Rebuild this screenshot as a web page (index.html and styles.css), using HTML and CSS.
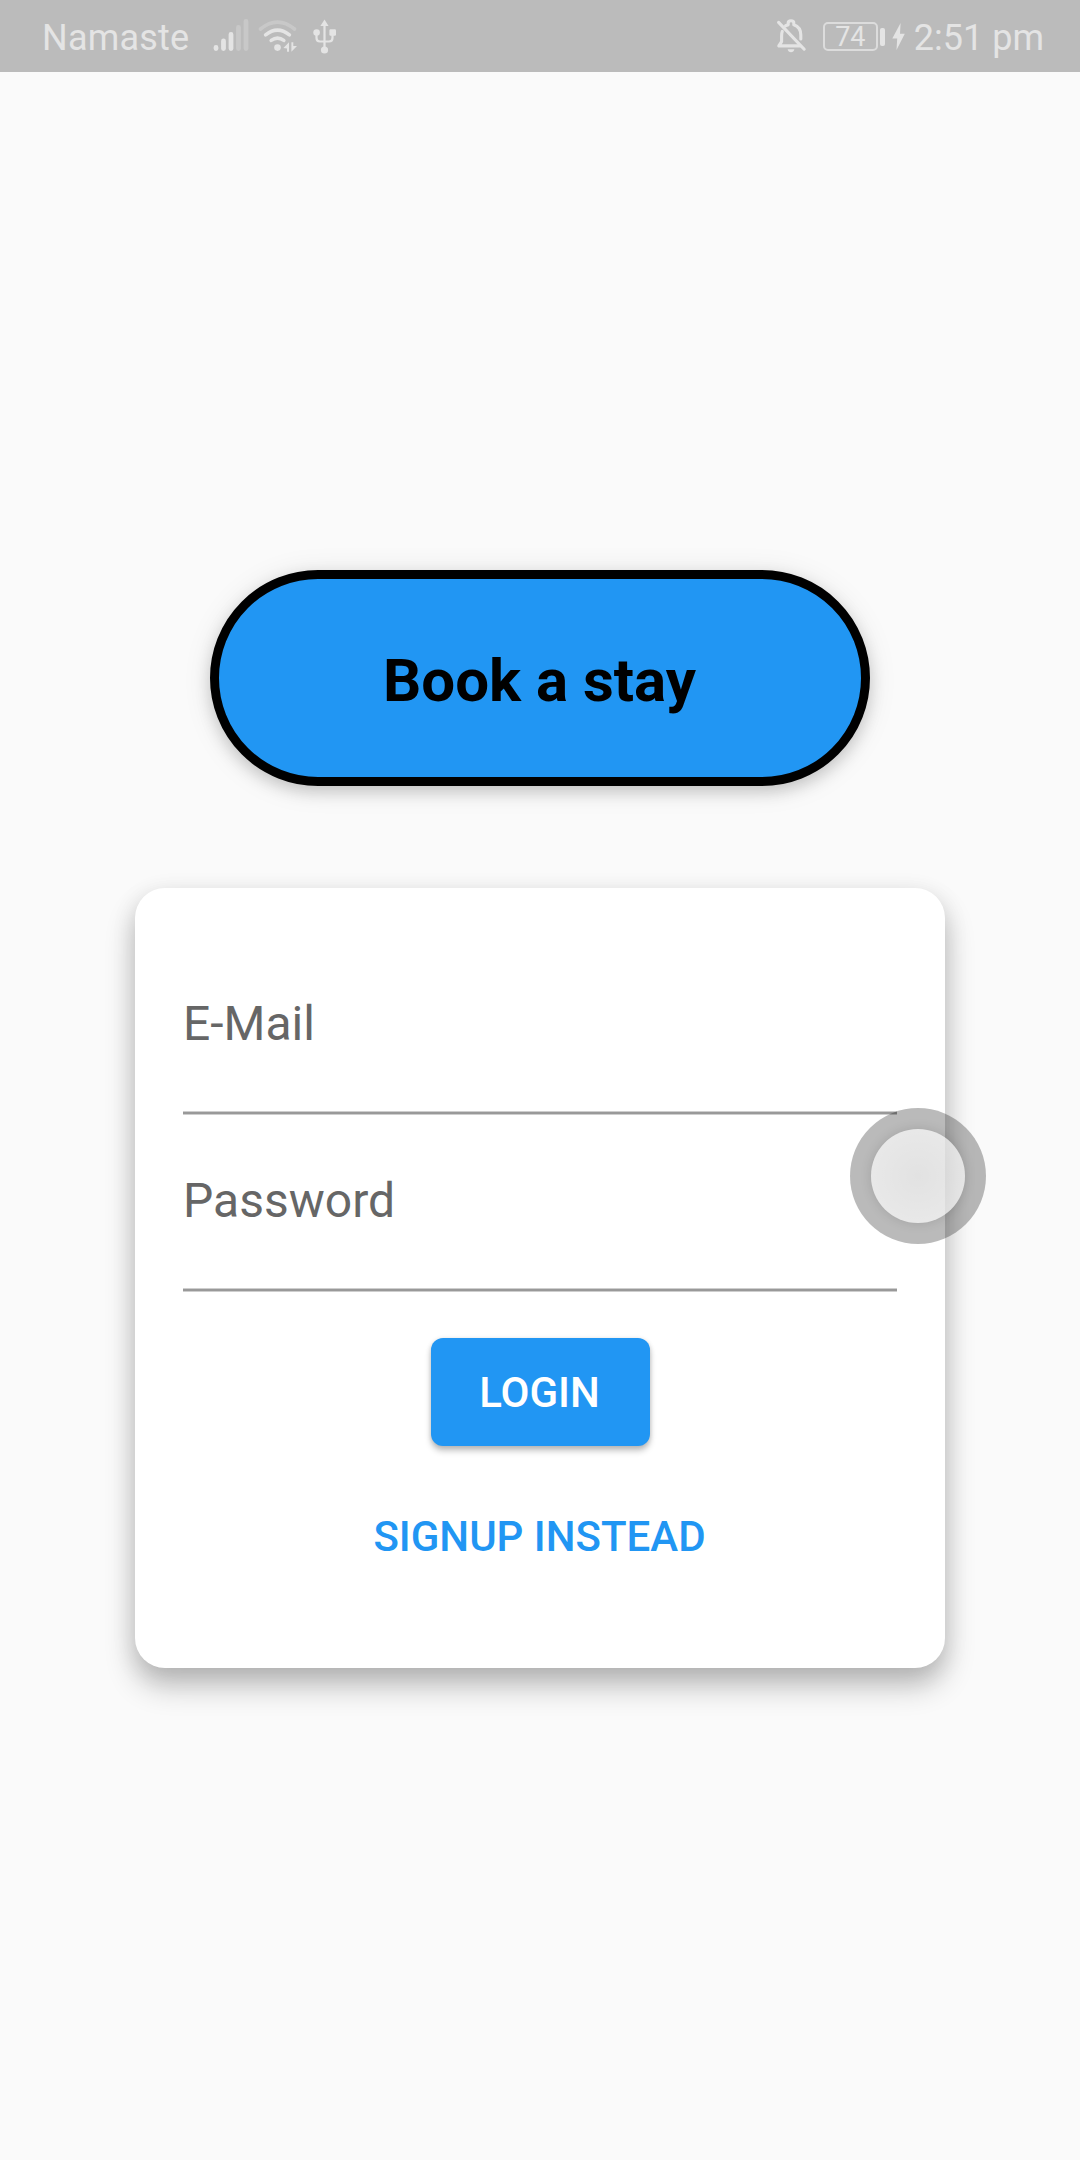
FILE: index.html
```html
<!DOCTYPE html>
<html lang="en">
<head>
<meta charset="utf-8">
<meta name="viewport" content="width=device-width">
<title>Book a stay</title>
<link rel="stylesheet" href="styles.css">
</head>
<body>
<header class="status-bar">
  <div class="status-left">
    <span class="carrier">Namaste</span>
    <svg class="icon-signal" width="36" height="34" viewBox="0 0 36 34" fill="none" stroke="#e4e4e4" stroke-width="4.8" stroke-linecap="round">
      <path d="M3 28.4V29.6M10.5 22V29.6M18 15.5V29.6"/>
      <path class="dim" d="M25.5 8.4V29.6M33 2.4V29.6"/>
    </svg>
    <svg class="icon-wifi" width="40" height="34" viewBox="0 0 40 34" fill="none" stroke="#e4e4e4" stroke-width="3.6" stroke-linecap="round">
      <path class="dim" d="M2.5 10Q19.5-3.8 36.5 10"/>
      <path d="M7.6 15.8Q19.5 6.4 31.4 15.8M13.2 21.4Q19.5 16.8 25.8 21.4"/>
      <circle cx="19.5" cy="28.6" r="3.3" fill="#e4e4e4" stroke="none"/>
      <path d="M31 23.2V32.8H29V29.6L25.4 29ZM33.4 23.2V32.8L39 27H35.3V23.2Z" fill="#e4e4e4" stroke="none"/>
    </svg>
    <svg class="icon-usb" width="24" height="36" viewBox="0 0 24 36" fill="none" stroke="#e4e4e4" stroke-width="2.2">
      <path d="M11.5 6V31M3.5 14V19Q3.5 22.5 7 22.5H16Q19.5 22.5 19.5 19V14"/>
      <path d="M11.5 .4L15.6 7H7.4Z" fill="#e4e4e4" stroke="none"/>
      <circle cx="3.6" cy="13.5" r="3.3" fill="#e4e4e4" stroke="none"/>
      <rect x="16.4" y="10.2" width="6.6" height="6.6" rx="1.2" fill="#e4e4e4" stroke="none"/>
      <circle cx="11.5" cy="31" r="3.6" fill="#e4e4e4" stroke="none"/>
    </svg>
  </div>
  <div class="status-right">
    <svg class="icon-bell" width="31" height="34" viewBox="0 0 31 34" fill="none" stroke="#e4e4e4" stroke-width="3.1" stroke-linejoin="round" stroke-linecap="round">
      <path d="M2.6 3.4L28.2 30.2"/>
      <path d="M6.3 12.4Q5.6 14 5.6 17V22.6L2.8 26.9H24"/>
      <path d="M9.6 6.8L12.2 5.7V4Q12.2 1.8 15 1.8Q17.8 1.8 17.8 4V5.7Q24.8 8 24.8 16V20"/>
      <path d="M11.6 30.2H18.4Q17.7 33.2 15 33.2Q12.3 33.2 11.6 30.2Z" fill="#e4e4e4" stroke="none"/>
    </svg>
    <span class="battery"><span class="battery-level">74</span></span>
    <span class="battery-tip"></span>
    <svg class="icon-bolt" width="13" height="27" viewBox="0 0 13 27"><path d="M8.6 0L.3 15.6H5.2L4.5 27L12.8 10.8H8Z" fill="#e4e4e4"/></svg>
    <span class="clock">2:51 pm</span>
  </div>
</header>
<main class="screen">
  <h1 class="banner">Book a stay</h1>
  <form class="card">
    <label class="field"><span class="field-label">E-Mail</span></label>
    <label class="field"><span class="field-label">Password</span></label>
    <button class="login" type="button">LOGIN</button>
    <button class="signup" type="button">SIGNUP INSTEAD</button>
  </form>
</main>
<div class="assist"><div class="assist-core"></div></div>
</body>
</html>
```
FILE: styles.css
```css
* { box-sizing: border-box; }

body {
  margin: 0;
  width: 1080px;
  height: 2160px;
  overflow: hidden;
  background: #fafafa;
  font-family: Roboto, "Liberation Sans", sans-serif;
}

svg { display: block; flex: none; }

.status-bar {
  display: flex;
  justify-content: space-between;
  height: 72px;
  padding: 0 36px 0 42px;
  background: #bbb;
  color: #e4e4e4;
  font-size: 36px;
  line-height: 76px;
  white-space: nowrap;
}

.status-left, .status-right { display: flex; align-items: flex-start; }
.carrier { width: 171px; letter-spacing: 0.2px; }
.dim { stroke: #c8c8c8; }
.icon-signal { margin-top: 19px; }
.icon-wifi { margin: 19px 0 0 9px; }
.icon-usb { margin: 19px 0 0 15px; }
.icon-bell { margin: 19px 16px 0 0; }

.battery {
  width: 55px;
  height: 29px;
  margin-top: 22px;
  border: 2px solid #dcdcdc;
  border-radius: 5px;
  font-size: 27px;
  line-height: 26px;
  text-align: center;
}

.battery-tip {
  width: 5px;
  height: 18px;
  margin: 28px 7px 0 2px;
  border-radius: 2px;
  background: #e4e4e4;
}

.icon-bolt { margin-top: 23px; }
.clock { margin-left: 9px; }

.screen {
  display: flex;
  flex-direction: column;
  align-items: center;
  padding-top: 498px;
}

.banner {
  width: 660px;
  height: 216px;
  margin: 0;
  padding: 3px 1px 0 0;
  border: 9px solid #000;
  border-radius: 108px;
  background: #2196f3;
  box-shadow: 0 6px 15px rgba(0, 0, 0, .17), 0 3px 30px rgba(0, 0, 0, .09);
  color: #000;
  font-size: 60px;
  font-weight: 700;
  line-height: 198px;
  text-align: center;
}

.card {
  display: flex;
  flex-direction: column;
  align-items: center;
  width: 810px;
  height: 780px;
  margin-top: 102px;
  padding: 50px 48px 0;
  border-radius: 30px;
  background: #fff;
  box-shadow: 0 18px 30px rgba(0, 0, 0, .24), 0 6px 24px rgba(0, 0, 0, .1);
}

.field {
  width: 714px;
  height: 177px;
  padding-top: 58px;
  background: linear-gradient(#cecece 1px, #999 1px, #999 3px, #cecece 3px) bottom / 100% 4px no-repeat;
}

.field-label {
  display: block;
  color: #666;
  font-size: 48px;
  line-height: 56px;
}

.login, .signup {
  padding: 2px 1px 0 0;
  border: 0;
  font: 500 42px/106px Roboto, "Liberation Sans", sans-serif;
}

.login {
  width: 219px;
  height: 108px;
  margin-top: 46px;
  border-radius: 12px;
  background: #2196f3;
  box-shadow: 0 5px 6px rgba(0, 0, 0, .22), 0 1px 5px rgba(0, 0, 0, .14);
  color: #fff;
}

.signup {
  height: 108px;
  margin-top: 36px;
  background: none;
  color: #2196f3;
}

/* Floating navigation dock that hovers over the page */
.assist {
  position: absolute;
  left: 850px;
  top: 1108px;
  display: grid;
  place-items: center;
  width: 136px;
  height: 136px;
  border-radius: 50%;
  background: rgba(0, 0, 0, .27);
}

.assist-core {
  width: 94px;
  height: 94px;
  border-radius: 50%;
  background: radial-gradient(circle, rgba(255, 255, 255, .58), rgba(255, 255, 255, .67) 70%);
  box-shadow: 0 0 12px rgba(0, 0, 0, .13);
}
```
